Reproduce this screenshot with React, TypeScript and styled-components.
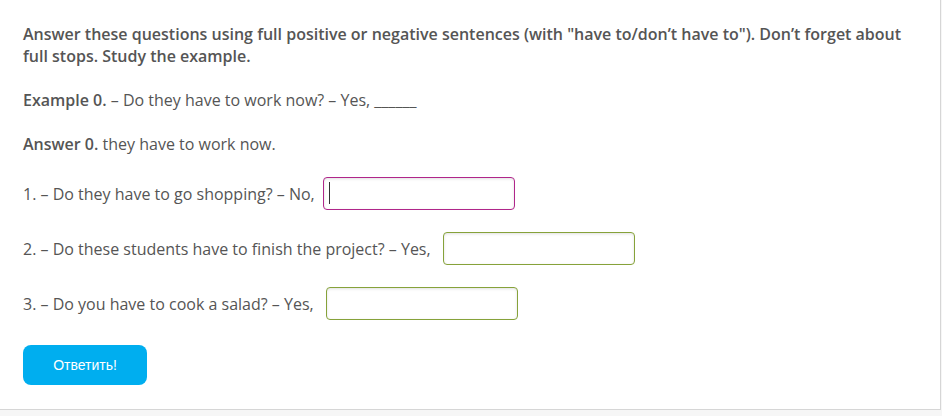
import React from "react";
import styled, { createGlobalStyle } from "styled-components";

const GlobalStyle = createGlobalStyle`
  html, body {
    margin: 0;
    padding: 0;
    background: #f6f6f6;
  }
  body {
    font-family: "Open Sans", "Liberation Sans", sans-serif;
  }
`;

const Card = styled.div`
  width: 917px;
  height: 386px;
  background: #fff;
  border-right: 1px solid #d6d6d6;
  border-bottom: 1px solid #d6d6d6;
  padding: 23px 0 0 23px;
  color: #555;
  font-size: 16px;
  line-height: 22px;
`;

const Task = styled.p`
  margin: 0 0 22px;
  font-weight: 600;
  max-width: 900px;
`;

const Line = styled.p`
  margin: 0 0 22px;
`;

const Bold = styled.span`
  font-weight: 600;
`;

const Row = styled.div`
  display: flex;
  align-items: center;
  margin-bottom: 22px;
`;

const FieldWrap = styled.span<{ $gap: number }>`
  position: relative;
  display: inline-flex;
  margin-left: ${(p) => p.$gap}px;
`;

const Field = styled.input<{ $active?: boolean }>`
  width: 192px;
  height: 33px;
  box-sizing: border-box;
  border: 1px solid ${(p) => (p.$active ? "#b0268a" : "#86a23a")};
  border-radius: 4px;
  box-shadow: inset 0 1px 3px rgba(0, 0, 0, 0.12);
  background: #fff;
  font: inherit;
  padding: 0 6px;
  outline: none;
`;

const Caret = styled.span`
  position: absolute;
  left: 6px;
  top: 5px;
  width: 1px;
  height: 22px;
  background: #333;
`;

const SubmitButton = styled.button`
  width: 124px;
  height: 40px;
  margin-top: 3px;
  background: #00aeef;
  color: #fff;
  border: none;
  border-radius: 8px;
  font-family: "Liberation Sans", Arial, sans-serif;
  font-size: 14px;
  cursor: pointer;
`;

const items = [
  { q: "1. – Do they have to go shopping? – No,", active: true, gap: 8 },
  { q: "2. – Do these students have to finish the project? – Yes,", active: false, gap: 12 },
  { q: "3. – Do you have to cook a salad? – Yes,", active: false, gap: 12 },
];

export default function App() {
  return (
    <>
      <GlobalStyle />
      <Card>
        <Task>
          Answer these questions using full positive or negative sentences (with "have to/don’t have to"). Don’t forget about full stops. Study the example.
        </Task>
        <Line>
          <Bold>Example 0.</Bold> – Do they have to work now? – Yes, ______
        </Line>
        <Line>
          <Bold>Answer 0.</Bold> they have to work now.
        </Line>
        {items.map((it, i) => (
          <Row key={i}>
            <span>{it.q}</span>
            <FieldWrap $gap={it.gap}>
              <Field $active={it.active} />
              {it.active && <Caret />}
            </FieldWrap>
          </Row>
        ))}
        <SubmitButton>Ответить!</SubmitButton>
      </Card>
    </>
  );
}
